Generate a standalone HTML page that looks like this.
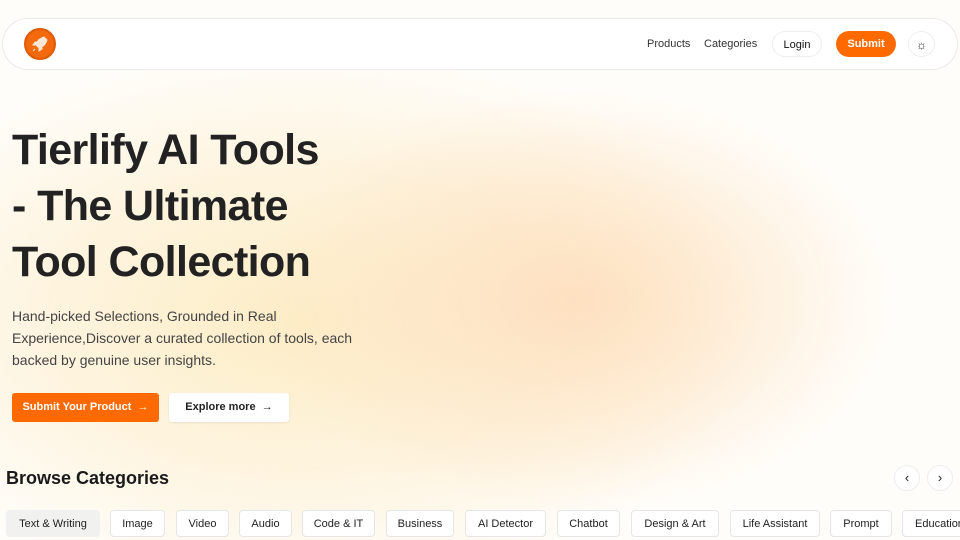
<!DOCTYPE html>
<html><head><meta charset="utf-8"><style>
*{box-sizing:border-box;margin:0;padding:0}
body{width:960px;height:540px;overflow:hidden;font-family:"Liberation Sans",sans-serif;color:#1a1a1a;position:relative;
background:radial-gradient(ellipse 320px 210px at 570px 300px,#fde0c0 0%,rgba(253,228,196,.6) 50%,rgba(255,255,255,0) 100%),
radial-gradient(ellipse 460px 270px at 300px 320px,#fdedc6 0%,rgba(253,241,214,.75) 55%,rgba(255,255,255,0) 100%),#fffdf9;}
.hdr{position:absolute;left:2px;top:18px;width:956px;height:52px;border:1px solid #ebebeb;border-radius:26px;background:#fff}
.logo{position:absolute;left:24px;top:28px;width:32px;height:32px;border-radius:50%;background:#f26a0c;border:2px solid #e25a06}
.nav{position:absolute;top:38px;font-size:11px;color:#333}
.btn{position:absolute;border-radius:14px;font-size:11px;text-align:center;line-height:26px;height:26px}
h1{position:absolute;left:12px;top:122px;font-size:43px;line-height:56px;font-weight:bold;letter-spacing:-.6px;color:#222}
p.d{position:absolute;left:12px;top:305px;width:360px;font-size:14px;line-height:22px;color:#444}
.b2{position:absolute;top:393px;height:29px;font-size:11px;font-weight:bold;line-height:29px;border-radius:3px;text-align:center}
h2{position:absolute;left:6px;top:468px;font-size:18px;font-weight:bold}
.chip{position:absolute;top:510px;height:27px;line-height:27px;font-size:11px;text-align:center;border:1px solid #e6e6e6;border-radius:4px;background:#fff;color:#222}
.circ{position:absolute;top:465px;width:26px;height:26px;border-radius:50%;background:#fff;border:1px solid #eee;text-align:center;line-height:24px;font-size:13px}
</style></head><body>
<div class="hdr"></div>
<div class="logo"><svg width="28" height="28" viewBox="0 0 28 28"><path d="M18 7c-4 1-7 4-8 8l3 3c4-1 7-4 8-8z M10 15l-3 0 2-3 3 0z M13 18l0 3 3-2 0-3z M9 19l-2 2" fill="#ffe9d6" stroke="#ffe9d6" stroke-width="1"/></svg></div>
<div class="nav" style="left:647px">Products</div>
<div class="nav" style="left:704px">Categories</div>
<div class="btn" style="left:772px;top:31px;width:50px;border:1px solid #eee;background:#fff;color:#111">Login</div>
<div class="btn" style="left:836px;top:31px;width:60px;background:#ff6a00;color:#fff;font-weight:bold">Submit</div>
<div class="btn" style="left:908px;top:31px;width:27px;border:1px solid #eee;border-radius:50%;font-size:12px">☼</div>
<h1>Tierlify AI Tools<br>- The Ultimate<br>Tool Collection</h1>
<p class="d">Hand-picked Selections, Grounded in Real Experience,Discover a curated collection of tools, each backed by genuine user insights.</p>
<div class="b2" style="left:12px;width:147px;background:#ff6a00;color:#fff">Submit Your Product &nbsp;→</div>
<div class="b2" style="left:169px;width:120px;background:#fff;color:#222;box-shadow:0 1px 2px rgba(0,0,0,.08)">Explore more &nbsp;→</div>
<h2>Browse Categories</h2>
<div class="circ" style="left:894px">‹</div>
<div class="circ" style="left:927px">›</div>
<div class="chip" style="left:6px;width:94px;background:#f1f1ef;border-color:#f1f1ef">Text &amp; Writing</div>
<div class="chip" style="left:110px;width:55px">Image</div>
<div class="chip" style="left:176px;width:53px">Video</div>
<div class="chip" style="left:239px;width:53px">Audio</div>
<div class="chip" style="left:302px;width:73px">Code &amp; IT</div>
<div class="chip" style="left:386px;width:68px">Business</div>
<div class="chip" style="left:465px;width:81px">AI Detector</div>
<div class="chip" style="left:557px;width:63px">Chatbot</div>
<div class="chip" style="left:631px;width:88px">Design &amp; Art</div>
<div class="chip" style="left:730px;width:90px">Life Assistant</div>
<div class="chip" style="left:830px;width:62px">Prompt</div>
<div class="chip" style="left:902px;width:80px;text-align:left;padding-left:12px">Education</div>
</body></html>
